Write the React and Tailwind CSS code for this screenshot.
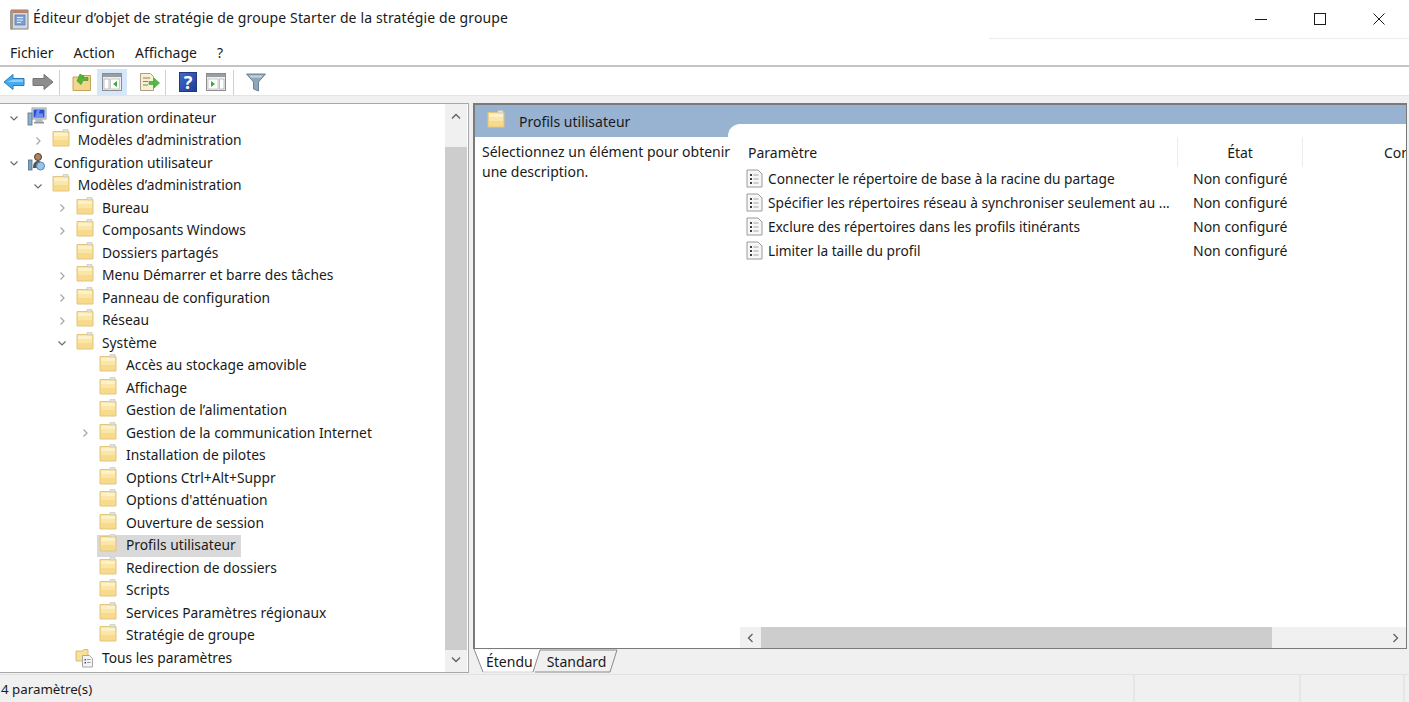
import React from "react";

const font = { fontFamily: '"Noto Sans", sans-serif' };

const treeRows = [
  { depth: 0, label: "Configuration ordinateur", open: true, icon: "computer" },
  { depth: 1, label: "Modèles d’administration", closed: true },
  { depth: 0, label: "Configuration utilisateur", open: true, icon: "user" },
  { depth: 1, label: "Modèles d’administration", open: true },
  { depth: 2, label: "Bureau", closed: true },
  { depth: 2, label: "Composants Windows", closed: true },
  { depth: 2, label: "Dossiers partagés" },
  { depth: 2, label: "Menu Démarrer et barre des tâches", closed: true },
  { depth: 2, label: "Panneau de configuration", closed: true },
  { depth: 2, label: "Réseau", closed: true },
  { depth: 2, label: "Système", open: true },
  { depth: 3, label: "Accès au stockage amovible" },
  { depth: 3, label: "Affichage" },
  { depth: 3, label: "Gestion de l’alimentation" },
  { depth: 3, label: "Gestion de la communication Internet", closed: true },
  { depth: 3, label: "Installation de pilotes" },
  { depth: 3, label: "Options Ctrl+Alt+Suppr" },
  { depth: 3, label: "Options d'atténuation" },
  { depth: 3, label: "Ouverture de session" },
  { depth: 3, label: "Profils utilisateur", selected: true },
  { depth: 3, label: "Redirection de dossiers" },
  { depth: 3, label: "Scripts" },
  { depth: 3, label: "Services Paramètres régionaux" },
  { depth: 3, label: "Stratégie de groupe" },
  { depth: 2, label: "Tous les paramètres", icon: "settings" },
];

const depthPad = ["pl-[6px]", "pl-[29.67px]", "pl-[54px]", "pl-[77px]"];

const settings = [
  "Connecter le répertoire de base à la racine du partage",
  "Spécifier les répertoires réseau à synchroniser seulement au ...",
  "Exclure des répertoires dans les profils itinérants",
  "Limiter la taille du profil",
];

function FolderIcon() {
  return (
    <svg width="18" height="18" viewBox="0 0 18 18" className="shrink-0 -mt-[5px]">
      <path d="M1 2.500h16v14.500H1z" fill="#f7da8c" stroke="#e2c67e" />
      <path d="M2 3.500h14v4H2z" fill="#fdf1c8" />
      <path d="M2 7h14v4H2z" fill="#fae6a6" />
      <path d="M11 0.500h5v2.500h-5z" fill="#dfe3de" stroke="#c8c4a8" strokeWidth="0.6" />
    </svg>
  );
}

function ComputerIcon() {
  return (
    <svg width="20" height="20" viewBox="0 0 20 20" className="shrink-0 -mt-[3px]">
      <rect x="5" y="1" width="14" height="11" fill="#dfe3e8" stroke="#9aa2ac" />
      <rect x="6.500" y="2.500" width="11" height="8" fill="#2450d8" />
      <path d="M10 2.500h3l-1 4h4v4H8z" fill="#6d8df0" />
      <path d="M9 12h6l1 3H8z" fill="#b4bbc3" />
      <path d="M7 15h10v1.500H7z" fill="#8f969e" />
      <rect x="1" y="6" width="4" height="12" fill="#8fb3cf" stroke="#50708a" strokeWidth="0.8" />
    </svg>
  );
}

function UserIcon() {
  return (
    <svg width="20" height="20" viewBox="0 0 20 20" className="shrink-0 -mt-[3px]">
      <circle cx="11" cy="5" r="3.500" fill="#b08260" stroke="#4d4036" />
      <path d="M6 16c0-5 2-7 5-7s5 2 5 7z" fill="#57524c" />
      <circle cx="13.500" cy="14" r="4" fill="#9cc3e6" stroke="#4f86bd" />
      <rect x="1.500" y="8" width="3.500" height="10" fill="#7fa3bf" stroke="#50708a" strokeWidth="0.8" />
    </svg>
  );
}

function SettingsFolderIcon() {
  return (
    <svg width="20" height="20" viewBox="0 0 20 20" className="shrink-0">
      <path d="M1 3h7l1-1.500h4V13H1z" fill="#f9e09a" stroke="#dcbc6c" />
      <path d="M7.500 7.500h7l3 3V19h-10z" fill="#f4f4f4" stroke="#a8a8a8" />
      <path d="M9.500 11h1.500v1.500H9.500zM9.500 14h1.500v1.500H9.500z" fill="#555" />
      <path d="M12 11.500h3.500M12 14.500h3.500" stroke="#999" />
    </svg>
  );
}

function PolicyIcon() {
  return (
    <svg width="17" height="19" viewBox="0 0 17 19" className="shrink-0">
      <path d="M1 1h11l4 4v13H1z" fill="#f7f7f7" stroke="#9a9a9a" />
      <path d="M4 5h2v2H4zM4 9h2v2H4zM4 13h2v2H4z" fill="#404040" />
      <path d="M7.500 6h5M7.500 10h5M7.500 14h5" stroke="#a5a5a5" />
    </svg>
  );
}

function Chevron({ open }) {
  if (open) {
    return (
      <svg width="16" height="16" viewBox="0 0 16 16" className="shrink-0">
        <path d="M4.500 6.500 8 10l3.500-3.500" fill="none" stroke="#6a6a6a" strokeWidth="1.200" />
      </svg>
    );
  }
  return (
    <svg width="16" height="16" viewBox="0 0 16 16" className="shrink-0">
      <path d="M6.500 4.500 10 8l-3.500 3.500" fill="none" stroke="#a6a6a6" strokeWidth="1.200" />
    </svg>
  );
}

function TreeRow({ row }) {
  return (
    <div className={`flex items-center h-[22.5px] ${depthPad[row.depth]}`}>
      {row.open || row.closed ? <Chevron open={row.open} /> : <div className="w-4 shrink-0" />}
      <div className={`flex items-center h-[22.5px] ml-1 pl-[2px] pr-[5px] ${row.selected ? "bg-[#d9d9d9]" : ""}`}>
        <div className="w-[18px] flex justify-center">
          {row.icon === "computer" && <ComputerIcon />}
          {row.icon === "user" && <UserIcon />}
          {row.icon === "settings" && <SettingsFolderIcon />}
          {!row.icon && <FolderIcon />}
        </div>
        <span className={`text-[13.8px] text-[#1a1a1a] whitespace-nowrap ${row.depth === 3 ? "ml-[9px]" : "ml-2"}`}>{row.label}</span>
      </div>
    </div>
  );
}

function Toolbar() {
  return (
    <div className="flex items-center h-[28px] pt-[2px] bg-white">
      {/* back */}
      <svg width="22" height="18" viewBox="0 0 22 18" className="ml-[3px]">
        <path d="M1 9 10 1.500V5.500h11v7H10v4z" fill="#45abf0" stroke="#2c7cbd" strokeLinejoin="round" />
        <path d="M10 6.500h10v2.500H4z" fill="#8fd0f8" />
      </svg>
      {/* forward */}
      <svg width="22" height="18" viewBox="0 0 22 18" className="ml-[7px]">
        <path d="M21 9 12 1.500V5.500H1v7h11v4z" fill="#8d8d8d" stroke="#747474" strokeLinejoin="round" />
      </svg>
      <div className="w-px h-[25px] bg-[#d0d0d0] ml-[5px]" />
      {/* up one level */}
      <svg width="20" height="20" viewBox="0 0 20 20" className="ml-[12px]">
        <path d="M1 5h8l1-1.500h8.500V18.500H1z" fill="#f3d58b" stroke="#c4a35a" />
        <path d="M5 9l3-7 4 2.500-2 1h6v3h-5l-2 4z" fill="#53b53a" stroke="#3b8e28" strokeWidth="0.6" />
      </svg>
      {/* show/hide tree, active */}
      <div className="flex items-center justify-center w-[30px] h-[27px] ml-[5px] bg-[#d5e7f8]">
        <svg width="20" height="18" viewBox="0 0 20 18">
          <rect x="0.500" y="0.500" width="19" height="17" fill="#eef0f2" stroke="#8c8c8c" />
          <rect x="1" y="1" width="18" height="3" fill="#9a9ea3" />
          <path d="M2 6h5v10H2z" fill="#ffffff" stroke="#9aa9b8" strokeWidth="0.7" />
          <path d="M8.500 6h9v10h-9z" fill="#ffffff" stroke="#b5b5b5" strokeWidth="0.7" />
          <path d="M15 8v6l-4-3z" fill="#39a93a" />
        </svg>
      </div>
      {/* export list */}
      <svg width="21" height="20" viewBox="0 0 21 20" className="ml-[12px]">
        <path d="M1.500 1.500h10l3 3v14h-13z" fill="#f8efd0" stroke="#a8a08a" />
        <path d="M4 6h7M4 9.500h5M4 13h5" stroke="#8a8060" />
        <path d="M10 9.500h5V6l5.500 5-5.500 5v-3.500h-5z" fill="#55bb44" stroke="#3f9a31" strokeWidth="0.6" />
      </svg>
      <div className="w-px h-[25px] bg-[#d0d0d0] ml-[5px]" />
      {/* help */}
      <div className="flex items-center justify-center w-[18px] h-[20px] ml-[13px] bg-gradient-to-br from-[#3f69c8] to-[#1f3f98] border border-[#1f3a80] text-white text-[18px] font-bold leading-none">?</div>
      {/* show/hide action pane */}
      <svg width="20" height="18" viewBox="0 0 20 18" className="ml-[9px]">
        <rect x="0.500" y="0.500" width="19" height="17" fill="#eef0f2" stroke="#8c8c8c" />
        <rect x="1" y="1" width="18" height="3" fill="#9a9ea3" />
        <path d="M2 6h10v10H2z" fill="#ffffff" stroke="#b5b5b5" strokeWidth="0.7" />
        <path d="M13.500 6h4.500v10h-4.500z" fill="#ffffff" stroke="#9aa9b8" strokeWidth="0.7" />
        <path d="M5 8v6l4-3z" fill="#39a93a" />
      </svg>
      <div className="w-px h-[25px] bg-[#d0d0d0] ml-[7px]" />
      {/* filter */}
      <svg width="20" height="19" viewBox="0 0 20 19" className="ml-[12px]">
        <path d="M0.500 1h19l-7 8v9l-5-2V9z" fill="#8fa6b8" stroke="#6b8498" />
        <path d="M3 2.500h14l-2 2H5z" fill="#c9d6e0" />
      </svg>
    </div>
  );
}

export default function App() {
  return (
    <div className="w-[1409px] h-[702px] overflow-hidden flex flex-col bg-[#f0f0f0] text-[#1a1a1a]" style={font}>
      {/* title bar */}
      <div className="flex items-center h-[38px] bg-white">
        <svg width="20" height="21" viewBox="0 0 20 21" className="ml-[9px]">
          <path d="M2 1h17v19H2z" fill="#cfd8e6" stroke="#8a8074" />
          <path d="M2 1h17v3H2z" fill="#b8846a" />
          <path d="M1 2h3v18.500H1z" fill="#a39a90" />
          <rect x="6" y="6" width="10" height="10" fill="#7f9fd0" stroke="#4f6fa8" strokeWidth="0.6" />
          <path d="M8 8.500h6M8 11h6M8 13.500h4" stroke="#e6ecf5" />
        </svg>
        <span className="ml-1 -mt-[3px] text-[14px] tracking-[0.13px] text-[#1a1a1a] whitespace-nowrap">Éditeur d’objet de stratégie de groupe Starter de la stratégie de groupe</span>
        <div className="ml-auto flex mr-px">
          <div className="flex items-center justify-center w-[59px] h-[38px]">
            <div className="w-3 h-px bg-[#1a1a1a]" />
          </div>
          <div className="flex items-center justify-center w-[59px] h-[38px]">
            <div className="w-3 h-3 border border-[#1a1a1a]" />
          </div>
          <div className="flex items-center justify-center w-[59px] h-[38px]">
            <svg width="12" height="12" viewBox="0 0 12 12">
              <path d="M0.500 0.500l11 11M11.500 0.500l-11 11" stroke="#1a1a1a" fill="none" />
            </svg>
          </div>
        </div>
      </div>

      {/* menu */}
      <div className="relative flex items-center gap-5 pl-[10px] pt-[2px] h-[29px] bg-white text-[14px] border-b-2 border-[#c4c4c4]">
        <div className="absolute top-0 right-0 w-[420px] h-px bg-[#ececec]" />
        <span>Fichier</span>
        <span>Action</span>
        <span>Affichage</span>
        <span>?</span>
      </div>

      <Toolbar />
      <div className="h-px bg-[#e4e4e4]" />

      {/* panes */}
      <div className="flex flex-1 min-h-0 pt-[7px]">
        {/* tree */}
        <div className="flex w-[469px] h-[570px] bg-white border-t border-r border-b border-[#a8a8a8]">
          <div className="flex-1 pt-[3px] overflow-hidden">
            {treeRows.map((row, i) => (
              <TreeRow key={i} row={row} />
            ))}
          </div>
          <div className="flex flex-col w-[22px] mx-px bg-[#f0f0f0]">
            <div className="flex items-center justify-center h-[24px]">
              <svg width="10" height="7" viewBox="0 0 10 7">
                <path d="M1 5.500 5 1.500l4 4" fill="none" stroke="#606060" strokeWidth="1.300" />
              </svg>
            </div>
            <div className="h-[19px]" />
            <div className="flex-1 bg-[#cdcdcd]" />
            <div className="flex items-center justify-center h-[22px] pb-1">
              <svg width="10" height="7" viewBox="0 0 10 7">
                <path d="M1 1.500 5 5.500l4-4" fill="none" stroke="#606060" strokeWidth="1.300" />
              </svg>
            </div>
          </div>
        </div>

        {/* right side */}
        <div className="flex flex-col ml-[4px] w-[934px]">
          <div className="flex flex-col h-[546px] bg-white border-2 border-r border-b border-[#7a7a7a]">
            {/* header */}
            <div className="flex h-[32px] bg-[#98b2d1]">
              <div className="flex items-center w-[253px] pl-[12px] shrink-0 h-[32px]">
                <FolderIcon />
                <span className="ml-[14px] text-[14px]">Profils utilisateur</span>
              </div>
              <div className="flex-1 self-end h-[13px] bg-white rounded-tl-[12px]" />
            </div>
            <div className="flex flex-1 min-h-0">
              {/* description */}
              <div className="w-[265px] shrink-0 pl-[7px] pt-[5px] text-[14px] leading-[20px]">
                Sélectionnez un élément pour obtenir
                <br />
                une description.
              </div>
              {/* list */}
              <div className="flex flex-col flex-1 min-w-0">
                <div className="flex h-[30px] text-[14px] overflow-hidden items-center">
                  <div className="w-[437px] shrink-0 pl-[8px]">Paramètre</div>
                  <div className="w-[126px] shrink-0 h-full flex items-center justify-center border-l border-r border-[#ececec]">État</div>
                  <div className="pl-[81px] whitespace-nowrap">Commentaire</div>
                </div>
                <div className="flex-1">
                  {settings.map((s) => (
                    <div key={s} className="flex items-center h-[24px] text-[14px]">
                      <div className="w-[437px] shrink-0 flex items-center pl-[6px] overflow-hidden">
                        <PolicyIcon />
                        <span className="ml-[5px] text-[13.7px] whitespace-nowrap">{s}</span>
                      </div>
                      <div className="pl-[16px] -mt-[2px] whitespace-nowrap">Non configuré</div>
                    </div>
                  ))}
                </div>
                {/* horizontal scroll */}
                <div className="flex h-[21px] bg-[#f0f0f0]">
                  <div className="flex items-center justify-center w-[21px]">
                    <svg width="7" height="10" viewBox="0 0 7 10">
                      <path d="M5.500 1 1.500 5l4 4" fill="none" stroke="#606060" strokeWidth="1.300" />
                    </svg>
                  </div>
                  <div className="w-[511px] bg-[#cdcdcd]" />
                  <div className="flex flex-1 items-center justify-end pr-[7px]">
                    <svg width="7" height="10" viewBox="0 0 7 10">
                      <path d="M1.500 1l4 4-4 4" fill="none" stroke="#606060" strokeWidth="1.300" />
                    </svg>
                  </div>
                </div>
              </div>
            </div>
          </div>

          {/* tabs */}
          <div className="relative flex items-center h-[24px] pl-[13px] text-[14px]">
            <svg width="146" height="24" viewBox="0 0 146 24" className="absolute left-0 top-0">
              <path d="M1 0 10 23h50l7-22z" fill="#ffffff" />
              <path d="M1 0 10 23" fill="none" stroke="#8a8a8a" />
              <path d="M10 23h50" fill="none" stroke="#d4d4d4" />
              <path d="M60 23 67 1h77l-7 22H62" fill="none" stroke="#8a8a8a" />
            </svg>
            <span className="relative">Étendu</span>
            <span className="relative ml-[14px]">Standard</span>
          </div>
        </div>
      </div>

      {/* status bar */}
      <div className="flex h-[28px] border-t border-[#e2e2e2] items-center">
        <div className="w-[1133px] pl-px pt-[3px] text-[13.3px]">4 paramètre(s)</div>
        <div className="w-[166px] h-full border-l-2 border-[#e6e6e6]" />
        <div className="w-[106px] h-full border-l-2 border-r-2 border-[#e6e6e6]" />
      </div>
    </div>
  );
}
